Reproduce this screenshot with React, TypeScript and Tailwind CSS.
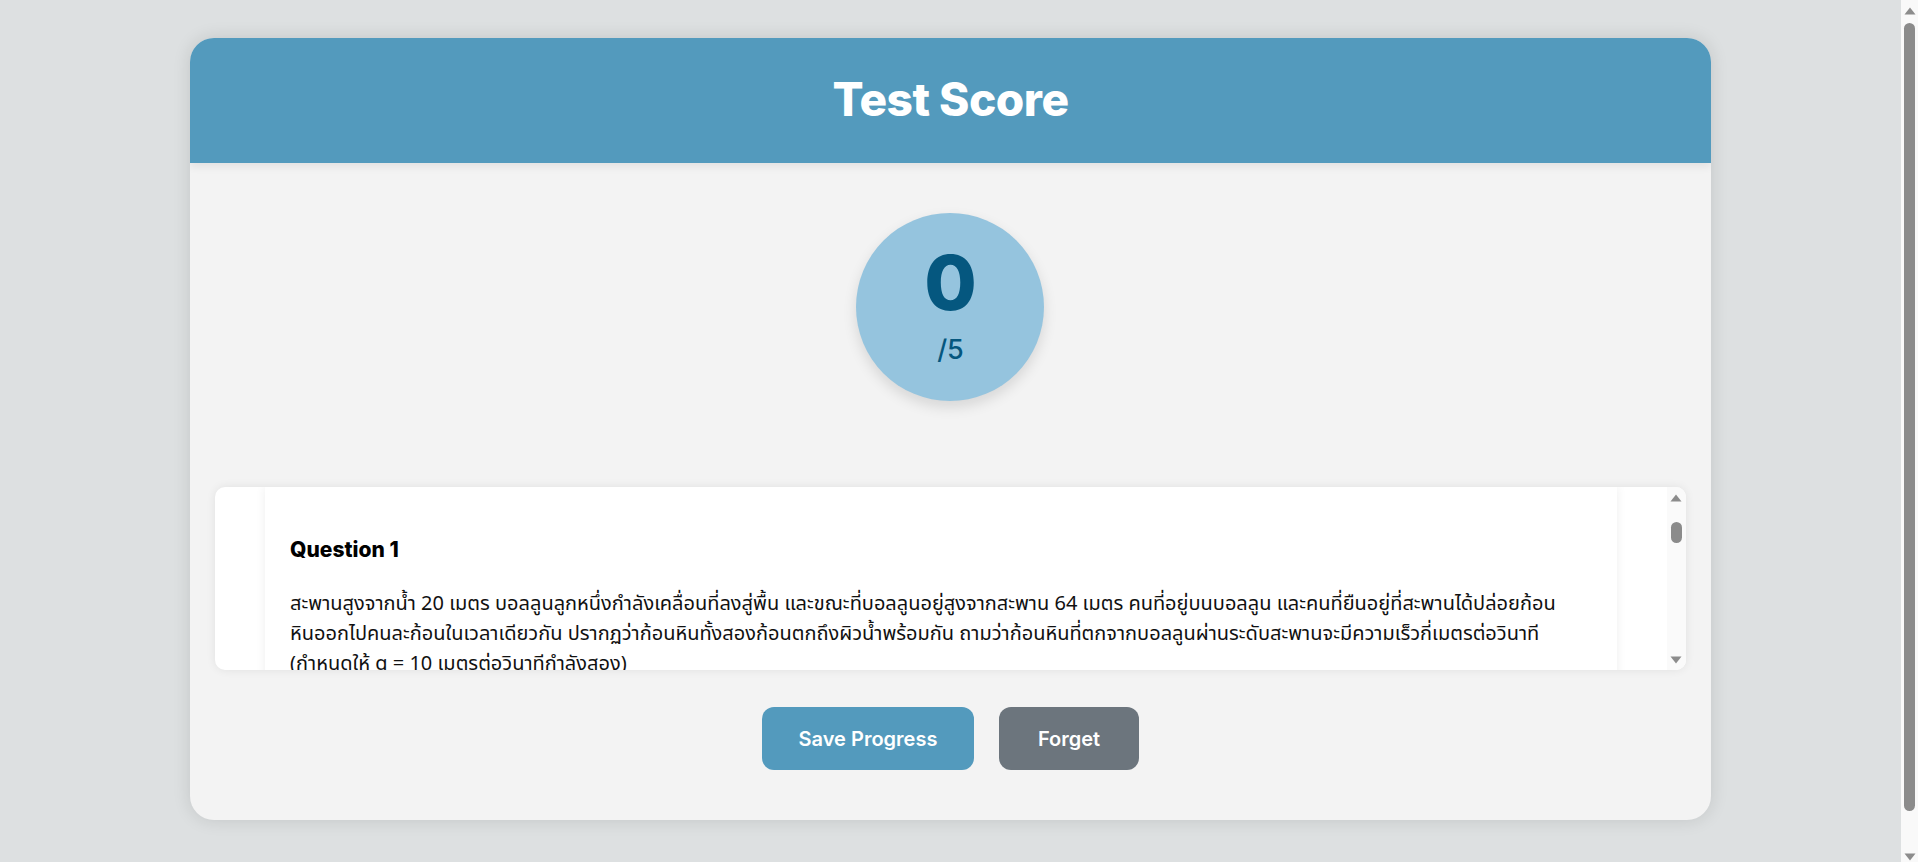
import React from 'react';

const thai = {
  fontFamily: '"Noto Sans Thai", "Noto Sans Thai Looped", "Noto Sans", sans-serif',
};

const questions = [
  {
    title: 'Question 1',
    lines: [
      'สะพานสูงจากน้ำ 20 เมตร บอลลูนลูกหนึ่งกำลังเคลื่อนที่ลงสู่พื้น และขณะที่บอลลูนอยู่สูงจากสะพาน 64 เมตร คนที่อยู่บนบอลลูน และคนที่ยืนอยู่ที่สะพานได้ปล่อยก้อน',
      'หินออกไปคนละก้อนในเวลาเดียวกัน ปรากฏว่าก้อนหินทั้งสองก้อนตกถึงผิวน้ำพร้อมกัน ถามว่าก้อนหินที่ตกจากบอลลูนผ่านระดับสะพานจะมีความเร็วกี่เมตรต่อวินาที',
      '(กำหนดให้ g = 10 เมตรต่อวินาทีกำลังสอง)',
    ],
    choices: ['10 เมตรต่อวินาที', '20 เมตรต่อวินาที', '30 เมตรต่อวินาที', '40 เมตรต่อวินาที'],
  },
  {
    title: 'Question 2',
    lines: ['วัตถุถูกปล่อยจากที่สูง 45 เมตร จะตกถึงพื้นในเวลากี่วินาที (กำหนดให้ g = 10 เมตรต่อวินาทีกำลังสอง)'],
    choices: ['1 วินาที', '2 วินาที', '3 วินาที', '4 วินาที'],
  },
  {
    title: 'Question 3',
    lines: ['รถยนต์เริ่มเคลื่อนที่จากหยุดนิ่งด้วยความเร่งคงตัว 2 เมตรต่อวินาทีกำลังสอง เมื่อเวลาผ่านไป 5 วินาที รถจะมีความเร็วเท่าใด'],
    choices: ['5 เมตรต่อวินาที', '10 เมตรต่อวินาที', '15 เมตรต่อวินาที', '20 เมตรต่อวินาที'],
  },
];

// little scrollbar arrows
const ArrowUp = () => (
  <svg width="12" height="8" viewBox="0 0 12 8">
    <path d="M6 0.5 L11.5 7.5 L0.5 7.5 Z" fill="#8c8c8c" />
  </svg>
);
const ArrowDown = () => (
  <svg width="12" height="8" viewBox="0 0 12 8">
    <path d="M0.5 0.5 L11.5 0.5 L6 7.5 Z" fill="#8c8c8c" />
  </svg>
);

const App: React.FC = () => {
  return (
    <div className="h-screen flex bg-[#dde0e1]">
      <div className="flex-1 overflow-y-auto">
        <div className="pt-[38px] pb-[88px]">
          <div className="w-4/5 mx-auto bg-[#f3f3f3] rounded-[24px] overflow-hidden shadow-[0_0_18px_rgba(0,0,0,0.12)]">
            {/* Header */}
            <div className="relative z-10 h-[125px] bg-[#539abd] flex items-center justify-center shadow-[0_4px_8px_rgba(0,0,0,0.07)]">
              <h1 className="text-white text-[46px] font-extrabold tracking-[-0.5px] mt-[-2px] font-['Inter',sans-serif]">
                Test Score
              </h1>
            </div>

            <div className="px-[25px] pt-[50px] pb-[50px]">
              {/* Score circle */}
              <div className="flex justify-center">
                <div className="w-[188px] h-[188px] rounded-full bg-[#95c4de] shadow-[0_6px_14px_rgba(0,0,0,0.12)] flex flex-col items-center justify-center pb-[8px] text-[#05577f] font-['Inter',sans-serif]">
                  <span className="text-[76px] font-extrabold leading-none">0</span>
                  <span className="text-[27px] font-medium leading-none mt-[16px]">/5</span>
                </div>
              </div>

              {/* Questions */}
              <div className="mt-[86px] h-[183px] bg-white rounded-[10px] overflow-hidden shadow-[0_0_10px_rgba(0,0,0,0.08)] flex">
                <div className="flex-1 overflow-y-auto px-[50px]">
                  <div className="bg-white px-[25px] pt-[48px] pb-[30px] shadow-[0_0_10px_rgba(0,0,0,0.07)]">
                    {questions.map((q, i) => (
                      <div key={i} className={i > 0 ? 'mt-[40px]' : ''}>
                        <h3 className="text-[21px] leading-[30px] font-extrabold text-black font-['Inter',sans-serif]">
                          {q.title}
                        </h3>
                        <p className="mt-[24px] text-[20px] leading-[30px] text-[#111]" style={thai}>
                          {q.lines.map((l, k) => (
                            <React.Fragment key={k}>
                              {k > 0 && <br />}
                              {l}
                            </React.Fragment>
                          ))}
                        </p>
                        <div className="mt-[16px] flex flex-col gap-[10px]">
                          {q.choices.map((c, j) => (
                            <label key={j} className="flex items-center gap-[10px] text-[20px] text-[#111]" style={thai}>
                              <span className="w-[16px] h-[16px] rounded-full border border-[#888] bg-white"></span>
                              {c}
                            </label>
                          ))}
                        </div>
                      </div>
                    ))}
                  </div>
                </div>
                {/* inner scrollbar */}
                <div className="w-[19px] bg-[#fafafa] flex flex-col items-center">
                  <div className="pt-[7px]"><ArrowUp /></div>
                  <div className="mt-[20px] w-[11px] h-[21px] rounded-full bg-[#8b8b8b]"></div>
                  <div className="flex-1"></div>
                  <div className="pb-[6px]"><ArrowDown /></div>
                </div>
              </div>

              {/* Buttons */}
              <div className="mt-[37px] flex justify-center gap-[25px] font-['Inter',sans-serif]">
                <button className="w-[212px] h-[63px] rounded-[12px] bg-[#539abd] text-white text-[20px] font-semibold">
                  Save Progress
                </button>
                <button className="w-[140px] h-[63px] rounded-[12px] bg-[#6c757d] text-white text-[20px] font-semibold">
                  Forget
                </button>
              </div>
            </div>
          </div>
        </div>
      </div>

      {/* page scrollbar */}
      <div className="w-[17px] bg-[#f9f9f9] flex flex-col items-center">
        <div className="pt-[7px]"><ArrowUp /></div>
        <div className="mt-[8px] w-[11px] h-[788px] rounded-full bg-[#8b8b8b]"></div>
        <div className="flex-1"></div>
        <div className="pb-[1px]"><ArrowDown /></div>
      </div>
    </div>
  );
};

export default App;
